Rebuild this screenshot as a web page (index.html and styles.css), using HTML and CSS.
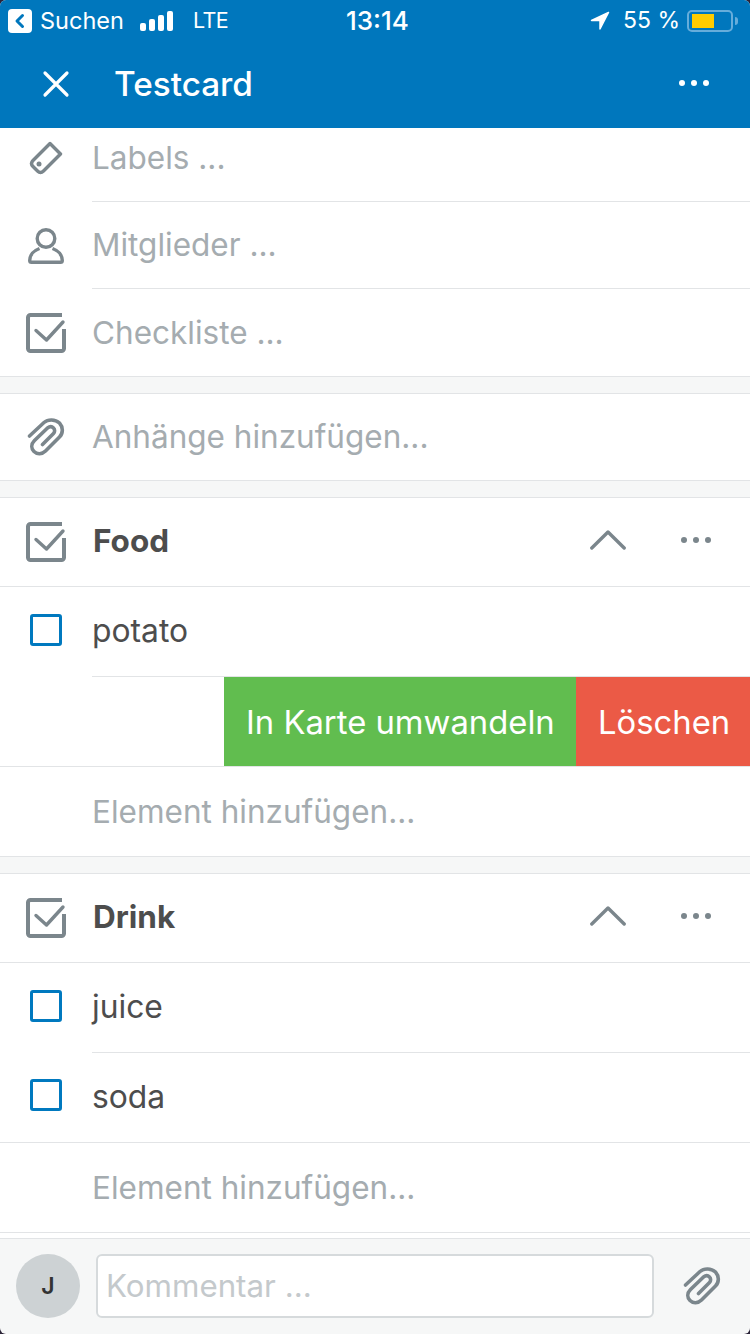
FILE: index.html
```html
<!DOCTYPE html>
<html lang="de">
<head>
    <meta charset="UTF-8">
    <meta name="viewport" content="width=device-width, initial-scale=1.0">
    <title>Testcard</title>
    <link rel="stylesheet" href="styles.css">
</head>
<body>
<svg class="defs" width="0" height="0">
    <defs>
        <g id="checklist">
            <path d="M36 2H4.500A2.500 2.500 0 0 0 2 4.500v31A2.500 2.500 0 0 0 4.500 38h31a2.500 2.500 0 0 0 2.500-2.500V16" fill="none" stroke="#7b868c" stroke-width="4"/>
            <path d="M10 17.500l10.500 9.500L37 9" fill="none" stroke="#7b868c" stroke-width="3.400" stroke-linecap="round" stroke-linejoin="round"/>
        </g>
        <path id="clip" d="M2.500 18 17 4.500C21 1 28 1 32.500 5c4 4.500 3.500 10.500 0 14l-14 14c-3.500 3.500-8.500 3.500-11.500.5s-3-7.500.5-11L20.500 10c2-1.500 4.500-1.500 6 0s1.500 4 0 5.500l-11 11" fill="none" stroke="#7b868c" stroke-width="3.600" stroke-linecap="round" stroke-linejoin="round"/>
        <g id="chevron-up">
            <path d="M1.800 18 18 2l16.200 16" fill="none" stroke="#7b868c" stroke-width="3.400" stroke-linecap="round" stroke-linejoin="round"/>
        </g>
        <g id="dots-grey">
            <circle cx="3" cy="3" r="3" fill="#7b868c"/><circle cx="15" cy="3" r="3" fill="#7b868c"/><circle cx="27" cy="3" r="3" fill="#7b868c"/>
        </g>
    </defs>
</svg>

<div class="screen">
    <header class="top">
        <div class="status">
            <div class="status-left">
                <svg width="24" height="24" viewBox="0 0 24 24"><rect width="24" height="24" rx="4" fill="#fff"/><path d="M14.500 6.500 9 12l5.500 5.500" fill="none" stroke="#0077bd" stroke-width="3" stroke-linecap="round" stroke-linejoin="round"/></svg>
                <span class="suchen">Suchen</span>
                <svg class="signal" width="33" height="20" viewBox="0 0 33 20"><rect x="0" y="12" width="6" height="8" rx="2" fill="#fff"/><rect x="9" y="8" width="6" height="12" rx="2" fill="#fff"/><rect x="18" y="4" width="6" height="16" rx="2" fill="#fff"/><rect x="27" y="0" width="6" height="20" rx="2" fill="#fff"/></svg>
                <span class="lte">LTE</span>
            </div>
            <div class="status-time">13:14</div>
            <div class="status-right">
                <svg class="arrow" width="20" height="20" viewBox="0 0 20 20"><path d="M18.500 1.500 1.500 9.500h8.500v8.500z" fill="#fff" stroke="#fff" stroke-width="1.500" stroke-linejoin="round"/></svg>
                <span class="pct">55 %</span>
                <div class="battery"><div class="battery-fill"></div></div>
                <div class="battery-tip"></div>
            </div>
        </div>
        <div class="appbar">
            <svg width="28" height="28" viewBox="0 0 28 28"><path d="M3 3l22 22M25 3 3 25" stroke="#fff" stroke-width="3.200" stroke-linecap="round"/></svg>
            <h1>Testcard</h1>
            <svg class="dots" width="30" height="6" viewBox="0 0 30 6"><circle cx="3" cy="3" r="3" fill="#fff"/><circle cx="15" cy="3" r="3" fill="#fff"/><circle cx="27" cy="3" r="3" fill="#fff"/></svg>
        </div>
    </header>

    <main class="content">
        <section class="group group-first">
            <div class="row row-87">
                <div class="row-icon">
                    <svg class="tag" width="36" height="36" viewBox="0 0 36 36"><path d="M22 3.500 32.500 14l-17 17q-3 3-6 0L5 26.500q-3-3 0-6z" fill="none" stroke="#7b868c" stroke-width="3.400" stroke-linejoin="round"/><circle cx="11" cy="24" r="2.500" fill="#7b868c"/></svg>
                </div>
                <div class="row-body line"><span class="hint up">Labels ...</span></div>
            </div>
            <div class="row row-87">
                <div class="row-icon">
                    <svg width="36" height="36" viewBox="0 0 36 36"><circle cx="18" cy="10.500" r="8.800" fill="none" stroke="#7b868c" stroke-width="3.400"/><path d="M11.500 20.500C6 22.500 1.700 27 1.700 32.500c0 1 .8 1.800 1.800 1.800h29c1 0 1.800-.8 1.800-1.800 0-5.500-4.300-10-9.800-12" fill="none" stroke="#7b868c" stroke-width="3.400" stroke-linejoin="round"/></svg>
                </div>
                <div class="row-body line"><span class="hint up">Mitglieder ...</span></div>
            </div>
            <div class="row row-87">
                <div class="row-icon"><svg width="40" height="40" viewBox="0 0 40 40"><use href="#checklist"/></svg></div>
                <div class="row-body"><span class="hint">Checkliste ...</span></div>
            </div>
        </section>

        <section class="group">
            <div class="row row-86">
                <div class="row-icon"><svg width="38" height="38" viewBox="0 0 38 38"><use href="#clip"/></svg></div>
                <div class="row-body"><span class="hint up">Anhänge hinzufügen...</span></div>
            </div>
        </section>

        <section class="group">
            <div class="row row-head row-full">
                <div class="row-icon"><svg width="40" height="40" viewBox="0 0 40 40"><use href="#checklist"/></svg></div>
                <div class="row-body"><span class="title">Food</span>
                    <svg class="chevron" width="36" height="20" viewBox="0 0 36 20"><use href="#chevron-up"/></svg>
                    <svg class="head-dots" width="30" height="6" viewBox="0 0 30 6"><use href="#dots-grey"/></svg>
                </div>
            </div>
            <div class="row row-item">
                <div class="row-icon"><span class="box"></span></div>
                <div class="row-body line"><span class="item">potato</span></div>
            </div>
            <div class="row row-item row-full row-swipe">
                <div class="swipe-btn swipe-green">In Karte umwandeln</div>
                <div class="swipe-btn swipe-red">Löschen</div>
            </div>
            <div class="row row-add">
                <div class="row-icon"></div>
                <div class="row-body"><span class="hint">Element hinzufügen...</span></div>
            </div>
        </section>

        <section class="group">
            <div class="row row-head row-full">
                <div class="row-icon"><svg width="40" height="40" viewBox="0 0 40 40"><use href="#checklist"/></svg></div>
                <div class="row-body"><span class="title">Drink</span>
                    <svg class="chevron" width="36" height="20" viewBox="0 0 36 20"><use href="#chevron-up"/></svg>
                    <svg class="head-dots" width="30" height="6" viewBox="0 0 30 6"><use href="#dots-grey"/></svg>
                </div>
            </div>
            <div class="row row-item">
                <div class="row-icon"><span class="box"></span></div>
                <div class="row-body line"><span class="item">juice</span></div>
            </div>
            <div class="row row-item row-full">
                <div class="row-icon"><span class="box"></span></div>
                <div class="row-body"><span class="item">soda</span></div>
            </div>
            <div class="row row-add">
                <div class="row-icon"></div>
                <div class="row-body"><span class="hint">Element hinzufügen...</span></div>
            </div>
        </section>
        <div class="tail"></div>
    </main>

    <footer class="composer">
        <div class="avatar">J</div>
        <div class="comment-box">Kommentar ...</div>
        <svg class="composer-clip" width="38" height="38" viewBox="0 0 38 38"><use href="#clip"/></svg>
    </footer>
</div>
</body>
</html>
```

FILE: styles.css
```css
html, body {
    margin: 0;
    padding: 0;
    background-color: #2b2438;
}

body {
    width: 750px;
    height: 1334px;
    overflow: hidden;
    font-family: Inter, "Noto Sans", sans-serif;
}

.defs {
    display: block;
}

.screen {
    width: 750px;
    height: 1334px;
    display: flex;
    flex-direction: column;
    background-color: #f6f7f7;
    border-radius: 6px;
    overflow: hidden;
}

/* top blue part */
.top {
    height: 128px;
    flex: none;
    background-color: #0077bd;
    color: #ffffff;
}

.status {
    height: 40px;
    padding: 2px 12px 0 8px;
    box-sizing: border-box;
    display: flex;
    align-items: center;
    justify-content: space-between;
    position: relative;
}

.status-left,
.status-right {
    display: flex;
    align-items: center;
}

.suchen {
    margin: 0 0 2px 8px;
    font-size: 23.5px;
}

.signal {
    margin-left: 16px;
}

.lte {
    margin: 0 0 2px 20px;
    font-size: 21.5px;
    letter-spacing: -0.5px;
}

.status-time {
    position: absolute;
    left: 346px;
    margin-bottom: 2px;
    font-size: 26px;
    font-weight: 500;
}

.arrow {
    margin-right: 13px;
}

.pct {
    margin-bottom: 2px;
    font-size: 23px;
}

.battery {
    width: 36px;
    height: 14px;
    margin-left: 7px;
    padding: 2px 4px 2px 2px;
    border: 2px solid #66addb;
    border-radius: 5px;
}

.battery-fill {
    width: 22px;
    height: 14px;
    margin-left: 1px;
    background-color: #ffcc00;
}

.battery-tip {
    width: 3px;
    height: 8px;
    margin-left: 2px;
    background-color: #66addb;
    border-radius: 0 3px 3px 0;
}

.appbar {
    height: 88px;
    padding: 0 41px 0 42px;
    box-sizing: border-box;
    display: flex;
    align-items: center;
}

.appbar h1 {
    flex: 1;
    margin: 0 0 0 44px;
    font-size: 33.3px;
    font-weight: 500;
}

.appbar .dots {
    margin-bottom: 2px;
}

/* list */
.content {
    flex: 1;
    min-height: 0;
    display: flex;
    flex-direction: column;
    overflow: hidden;
}

.group {
    flex: none;
    background-color: #ffffff;
    border-top: 1px solid #e2e4e6;
    border-bottom: 1px solid #e2e4e6;
    margin-bottom: 16px;
}

/* list is scrolled a bit, first row goes under the blue bar */
.group-first {
    border-top: none;
    margin-top: -13px;
}

.group:last-of-type {
    margin-bottom: 0;
}

.tail {
    flex: 1;
    background-color: #ffffff;
}

.row {
    display: flex;
    align-items: stretch;
    box-sizing: border-box;
}

.row-86 {
    height: 86px;
}

.row-87 {
    height: 87px;
}

.row-head {
    height: 89px;
}

.row-item {
    height: 90px;
}

.row-add {
    height: 89px;
}

.row-full {
    border-bottom: 1px solid #e2e4e6;
}

.row-icon {
    width: 92px;
    flex: none;
    display: flex;
    align-items: center;
    justify-content: center;
}

.row-body {
    flex: 1;
    min-width: 0;
    display: flex;
    align-items: center;
}

.line {
    border-bottom: 1px solid #e2e4e6;
}

.tag {
    margin-bottom: 2px;
}

.hint {
    font-size: 31.5px;
    color: #a5acb0;
}

.up {
    margin-bottom: 2px;
}

.title {
    flex: 1;
    margin: 0 0 3px 1px;
    font-size: 31.5px;
    font-weight: 700;
    color: #4d4d4d;
}

.item {
    margin-bottom: 2px;
    font-size: 31.8px;
    color: #4d4d4d;
}

.box {
    width: 26px;
    height: 26px;
    margin-bottom: 5px;
    border: 3px solid #0079bf;
    border-radius: 3px;
}

.chevron {
    margin: 0 55px 4px 0;
}

.head-dots {
    margin: 0 39px 5px 0;
}

/* swiped row buttons */
.row-swipe {
    justify-content: flex-end;
}

.swipe-btn {
    padding: 0 22px;
    display: flex;
    align-items: center;
    font-size: 32.8px;
    color: #ffffff;
    white-space: nowrap;
}

.swipe-green {
    width: 308px;
    background-color: #61bd4f;
}

.swipe-red {
    width: 130px;
    background-color: #eb5a46;
}

/* comment bar */
.composer {
    height: 96px;
    flex: none;
    box-sizing: border-box;
    padding: 15px 0 0 16px;
    border-top: 1px solid #e2e4e6;
    display: flex;
    align-items: flex-start;
}

.avatar {
    width: 64px;
    height: 64px;
    flex: none;
    border-radius: 50%;
    background-color: #cdd2d4;
    color: #333333;
    font-size: 23px;
    font-weight: 600;
    display: flex;
    align-items: center;
    justify-content: center;
}

.comment-box {
    width: 558px;
    height: 64px;
    margin-left: 16px;
    box-sizing: border-box;
    padding-left: 8px;
    background-color: #ffffff;
    border: 2px solid #d6dadc;
    border-radius: 6px;
    display: flex;
    align-items: center;
    font-size: 31.3px;
    color: #c4c9cc;
}

.composer-clip {
    margin: 13px 0 0 29px;
}
```
